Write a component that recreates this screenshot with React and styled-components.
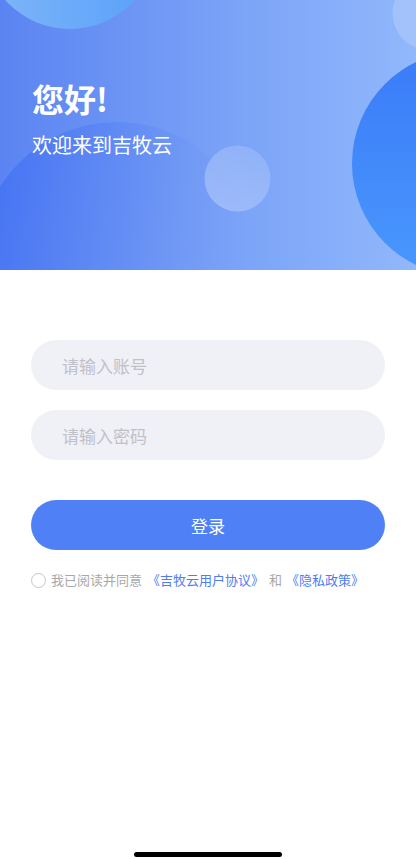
import React from 'react';
import styled, { createGlobalStyle } from 'styled-components';

const GlobalStyle = createGlobalStyle`
  * { box-sizing: border-box; }
  html, body {
    margin: 0;
    padding: 0;
    background: #ffffff;
    font-family: "Noto Sans CJK SC", "Noto Sans", sans-serif;
  }
`;

const Page = styled.div`
  width: 416px;
  min-height: 859px;
  display: flex;
  flex-direction: column;
  background: #ffffff;
`;

const Hero = styled.header`
  position: relative;
  height: 270px;
  overflow: hidden;
  background: linear-gradient(90deg, #5b84f2 0%, #7aa2f7 55%, #91b8fb 100%);
  padding: 76px 32px 0;
  display: flex;
  flex-direction: column;
  gap: 11px;
`;

// decorative bubbles behind the greeting
const Bubbles = styled.svg`
  position: absolute;
  inset: 0;
  width: 100%;
  height: 100%;
`;

const Title = styled.h1`
  position: relative;
  margin: 0;
  font-size: 32px;
  line-height: 44px;
  font-weight: 700;
  color: #ffffff;
`;

const Subtitle = styled.p`
  position: relative;
  margin: 0;
  font-size: 20px;
  line-height: 28px;
  font-weight: 400;
  color: #ffffff;
`;

const Form = styled.main`
  display: flex;
  flex-direction: column;
  padding: 70px 31px 0;
`;

const Field = styled.input`
  height: 50px;
  border: none;
  outline: none;
  border-radius: 25px;
  background: #f0f0f7;
  padding: 0 31px;
  font-family: inherit;
  font-size: 17px;
  color: #333;
  margin-bottom: ${p => p.$gap}px;

  &::placeholder {
    color: #c0c0c8;
  }
`;

const LoginButton = styled.button`
  height: 50px;
  border: none;
  border-radius: 25px;
  background: #4f80f6;
  color: #ffffff;
  font-family: inherit;
  font-size: 17px;
  cursor: pointer;
`;

const Agreement = styled.label`
  display: flex;
  align-items: center;
  margin-top: 21px;
  font-size: 13px;
  line-height: 18px;
  color: #a8a8a8;
  white-space: nowrap;
`;

const Radio = styled.span`
  width: 15px;
  height: 15px;
  border-radius: 50%;
  border: 1px solid #c6c6c6;
  margin-right: 5px;
  flex: none;
`;

const Link = styled.span`
  color: #4d7df1;
  margin: 0 ${p => p.$after || 0}px 0 ${p => p.$before || 0}px;
`;

const Footer = styled.div`
  margin-top: auto;
  display: flex;
  justify-content: center;
  padding-bottom: 2px;
`;

const HomeBar = styled.div`
  width: 148px;
  height: 5px;
  border-radius: 3px;
  background: #000000;
`;

export default function App() {
  return (
    <Page>
      <GlobalStyle />
      <Hero>
        <Bubbles viewBox="0 0 416 270" preserveAspectRatio="none">
          <defs>
            <linearGradient id="tl" x1="0" y1="0" x2="1" y2="0">
              <stop offset="0" stopColor="#80b6f8" />
              <stop offset="1" stopColor="#58a0fa" />
            </linearGradient>
            <linearGradient id="bl" x1="0" y1="0.3" x2="1" y2="0.5">
              <stop offset="0" stopColor="#3f6ff4" stopOpacity="0.8" />
              <stop offset="0.7" stopColor="#5b86f3" stopOpacity="0.15" />
              <stop offset="1" stopColor="#6f98f5" stopOpacity="0" />
            </linearGradient>
            <linearGradient id="rb" x1="0" y1="0" x2="0" y2="1">
              <stop offset="0" stopColor="#3b7bf8" />
              <stop offset="1" stopColor="#4998fd" />
            </linearGradient>
            <linearGradient id="mid" x1="1" y1="0" x2="0" y2="1">
              <stop offset="0" stopColor="#ffffff" stopOpacity="0.12" />
              <stop offset="1" stopColor="#ffffff" stopOpacity="0.3" />
            </linearGradient>
          </defs>
          <circle cx="117" cy="260" r="138" fill="url(#bl)" />
          <circle cx="70" cy="-58" r="87" fill="url(#tl)" />
          <circle cx="430" cy="13" r="37.5" fill="#a3c2fb" />
          <circle cx="464.5" cy="163.5" r="112.5" fill="url(#rb)" />
          <circle cx="237.5" cy="178.5" r="33" fill="url(#mid)" />
        </Bubbles>
        <Title>您好!</Title>
        <Subtitle>欢迎来到吉牧云</Subtitle>
      </Hero>

      <Form>
        <Field $gap={20} placeholder="请输入账号" />
        <Field $gap={40} type="password" placeholder="请输入密码" />
        <LoginButton>登录</LoginButton>
        <Agreement>
          <Radio />
          我已阅读并同意
          <Link $before={5} $after={5}>《吉牧云用户协议》</Link>
          和
          <Link $before={4}>《隐私政策》</Link>
        </Agreement>
      </Form>

      <Footer>
        <HomeBar />
      </Footer>
    </Page>
  );
}
